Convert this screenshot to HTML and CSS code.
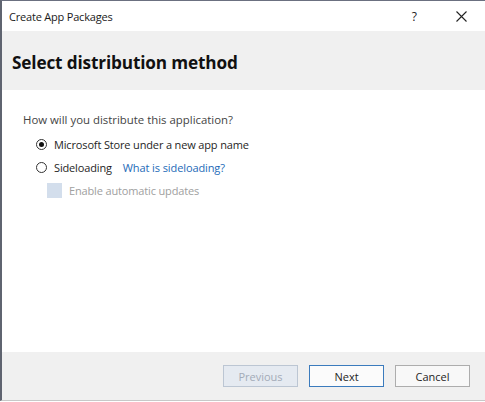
FILE: index.html
```html
<!DOCTYPE html>
<html>
<head>
<meta charset="utf-8">
<link rel="stylesheet" href="styles.css">
</head>
<body>
<div class="window">
  <div class="titlebar">
    <span class="title">Create App Packages</span>
    <span class="help">?</span>
    <span class="close"><svg width="11" height="11" viewBox="0 0 11 11"><path d="M0.5 0.5 L10.5 10.5 M10.5 0.5 L0.5 10.5" stroke="#222" stroke-width="1.1" fill="none"/></svg></span>
  </div>
  <div class="header"><h1>Select distribution method</h1></div>
  <div class="content">
    <p class="question">How will you distribute this application?</p>
    <div class="option">
      <span class="radio checked"><span class="dot"></span></span>
      <span class="label">Microsoft Store under a new app name</span>
    </div>
    <div class="option">
      <span class="radio"></span>
      <span class="label">Sideloading</span>
      <span class="link">What is sideloading?</span>
    </div>
    <div class="option sub">
      <span class="checkbox"></span>
      <span class="label disabled">Enable automatic updates</span>
    </div>
  </div>
  <div class="footer">
    <button class="btn prev" disabled>Previous</button>
    <button class="btn next">Next</button>
    <button class="btn">Cancel</button>
  </div>
</div>
</body>
</html>
```
FILE: styles.css
```css
html, body { margin: 0; padding: 0; }
body {
  width: 485px; height: 402px; overflow: hidden;
  font-family: "Open Sans", "Noto Sans", sans-serif;
  font-size: 11px; color: #1e1e1e;
  background: #ffffff;
}
.window {
  box-sizing: border-box;
  width: 485px; height: 401px;
  border-top: 1px solid #6b7080;
  border-left: 2px solid #5f6470;
  border-bottom: 1px solid #c8c8c8;
  display: flex; flex-direction: column;
}
.titlebar {
  height: 30px; display: flex; align-items: center;
  background: #fff;
}
.title { margin-left: 7px; font-size: 11px; color: #1a1a1a; flex: 1; letter-spacing: -0.2px; }
.help { font-size: 12px; margin-right: 39px; color: #222; }
.close { margin-right: 18px; display: flex; }
.header {
  height: 59px; background: #f0f0f0;
  display: flex; align-items: center;
  box-sizing: border-box; padding-top: 4px;
}
h1 { margin: 0 0 0 10px; font-size: 17.2px; font-weight: 700; color: #111; letter-spacing: -0.15px; }
.content { flex: 1; padding: 22px 0 0 21px; }
.question { margin: 0 0 6px; color: #444; font-size: 11.4px; }
.option { display: flex; align-items: center; height: 23px; margin-left: 13px; }
.option.sub { margin-left: 24px; height: 22px; }
.radio {
  box-sizing: border-box; width: 11px; height: 11px; border-radius: 50%;
  border: 1px solid #333; margin-right: 7px; display: flex; align-items: center; justify-content: center;
}
.radio .dot { width: 5px; height: 5px; border-radius: 50%; background: #111; }
.label { color: #1e1e1e; letter-spacing: -0.15px; }
.link { color: #1d6ab8; margin-left: 11px; letter-spacing: -0.1px; }
.checkbox { width: 15px; height: 15px; background: #d3deec; margin-right: 7px; }
.disabled { color: #a0a0a0; }
.footer {
  height: 48px; background: #f0f0f0;
  display: flex; align-items: center; justify-content: flex-end;
  padding-right: 15px; gap: 11px;
}
.btn {
  box-sizing: border-box; width: 75px; height: 22px;
  font-family: inherit; font-size: 11px; color: #1e1e1e;
  background: #f8f8f8; border: 1px solid #adadad; padding: 0;
}
.btn.next { border-color: #3b7bbd; background: #fbfbfb; }
.btn.prev { background: #e5eaf1; border-color: #bcc6d3; color: #a3abb8; }
```
